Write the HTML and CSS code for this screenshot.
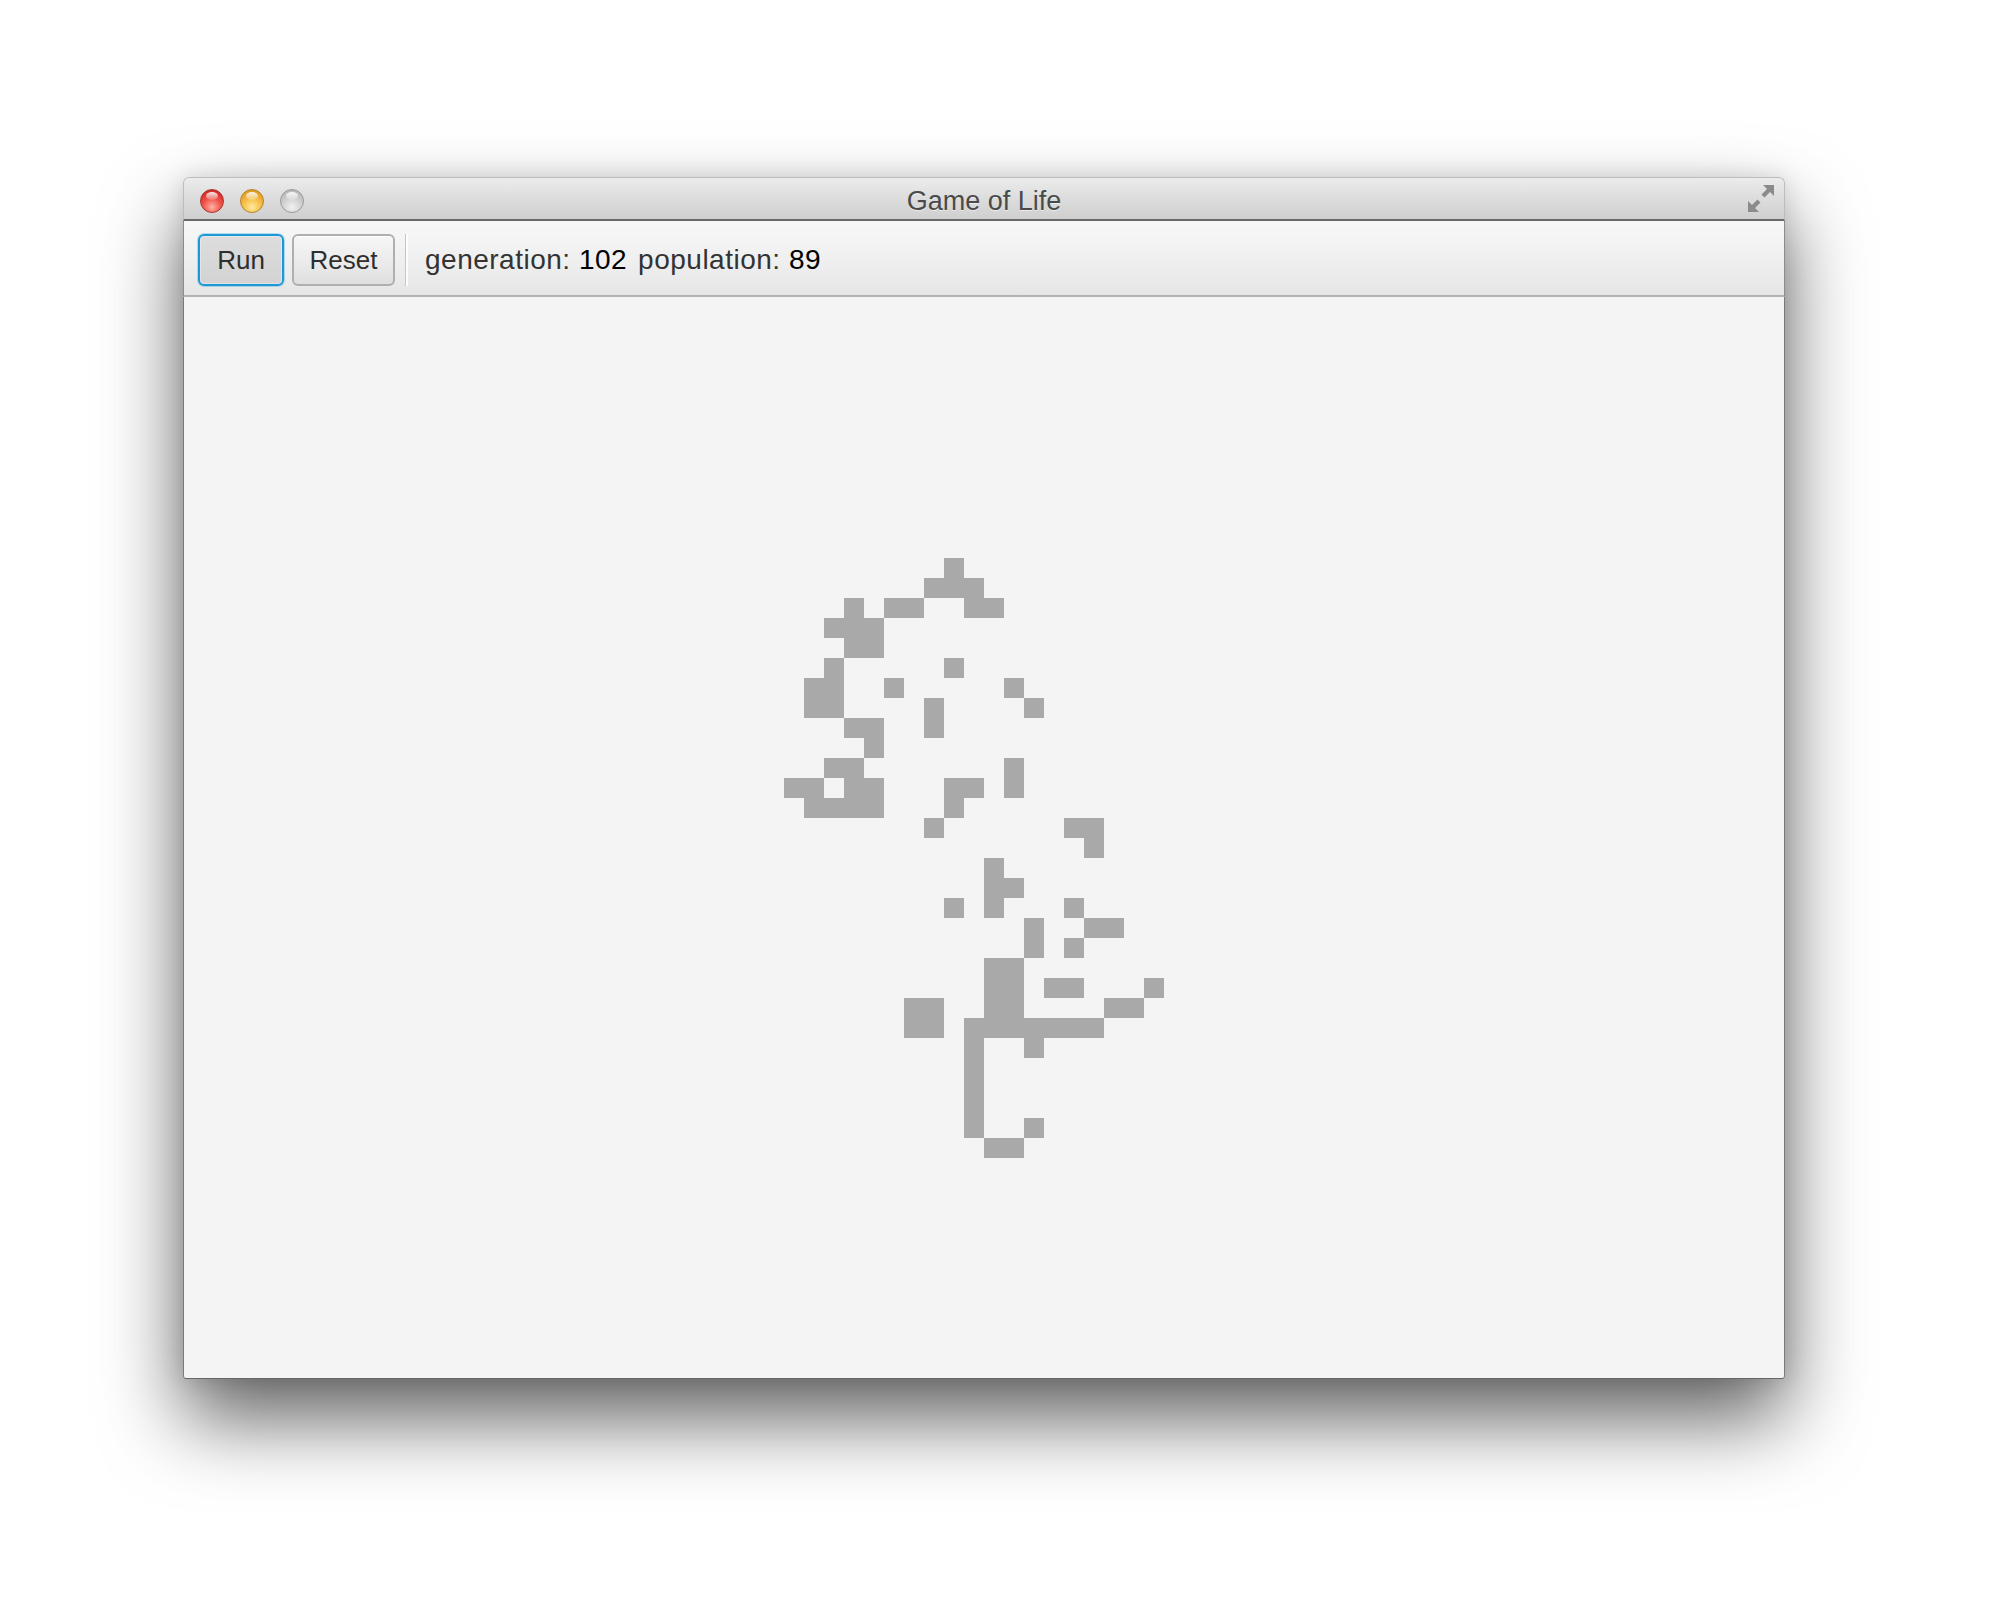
FILE: index.html
```html
<!DOCTYPE html>
<html lang="en">
<head>
<meta charset="utf-8">
<title>Game of Life</title>
<link rel="stylesheet" href="styles.css">
</head>
<body>
<div class="stage">
  <div class="window">
    <div class="titlebar">
      <div class="lights">
        <span class="light red"></span>
        <span class="light yellow"></span>
        <span class="light gray"></span>
      </div>
      <div class="title">Game of Life</div>
      <div class="resize">
        <svg width="26" height="27" viewBox="0 0 26 27">
          <path d="M26 0 L26 11 L22 7 L16.5 12.5 L13.5 9.5 L19 4 L15 0 Z" fill="#8b8b8b"/>
          <path d="M0 27 L0 16 L4 20 L9.5 14.5 L12.5 17.5 L7 23 L11 27 Z" fill="#8b8b8b"/>
        </svg>
      </div>
    </div>
    <div class="toolbar">
      <button class="btn focused">Run</button>
      <button class="btn reset">Reset</button>
      <span class="sep"></span>
      <span class="stat">generation: <span class="val">102</span></span>
      <span class="stat">population: <span class="val">89</span></span>
    </div>
    <div class="canvas">
      <svg class="board" width="1600" height="1081" viewBox="0 0 1600 1081" shape-rendering="crispEdges">
        <g transform="translate(600 261) scale(20)" fill="#a9a9a9">
          <rect x="8" y="0" width="1" height="1"/>
          <rect x="7" y="1" width="3" height="1"/>
          <rect x="3" y="2" width="1" height="1"/>
          <rect x="5" y="2" width="2" height="1"/>
          <rect x="9" y="2" width="2" height="1"/>
          <rect x="2" y="3" width="3" height="1"/>
          <rect x="3" y="4" width="2" height="1"/>
          <rect x="2" y="5" width="1" height="1"/>
          <rect x="8" y="5" width="1" height="1"/>
          <rect x="1" y="6" width="2" height="1"/>
          <rect x="5" y="6" width="1" height="1"/>
          <rect x="11" y="6" width="1" height="1"/>
          <rect x="1" y="7" width="2" height="1"/>
          <rect x="7" y="7" width="1" height="1"/>
          <rect x="12" y="7" width="1" height="1"/>
          <rect x="3" y="8" width="2" height="1"/>
          <rect x="7" y="8" width="1" height="1"/>
          <rect x="4" y="9" width="1" height="1"/>
          <rect x="2" y="10" width="2" height="1"/>
          <rect x="11" y="10" width="1" height="1"/>
          <rect x="0" y="11" width="2" height="1"/>
          <rect x="3" y="11" width="2" height="1"/>
          <rect x="8" y="11" width="2" height="1"/>
          <rect x="11" y="11" width="1" height="1"/>
          <rect x="1" y="12" width="4" height="1"/>
          <rect x="8" y="12" width="1" height="1"/>
          <rect x="7" y="13" width="1" height="1"/>
          <rect x="14" y="13" width="2" height="1"/>
          <rect x="15" y="14" width="1" height="1"/>
          <rect x="10" y="15" width="1" height="1"/>
          <rect x="10" y="16" width="2" height="1"/>
          <rect x="8" y="17" width="1" height="1"/>
          <rect x="10" y="17" width="1" height="1"/>
          <rect x="14" y="17" width="1" height="1"/>
          <rect x="12" y="18" width="1" height="1"/>
          <rect x="15" y="18" width="2" height="1"/>
          <rect x="12" y="19" width="1" height="1"/>
          <rect x="14" y="19" width="1" height="1"/>
          <rect x="10" y="20" width="2" height="1"/>
          <rect x="10" y="21" width="2" height="1"/>
          <rect x="13" y="21" width="2" height="1"/>
          <rect x="18" y="21" width="1" height="1"/>
          <rect x="6" y="22" width="2" height="1"/>
          <rect x="10" y="22" width="2" height="1"/>
          <rect x="16" y="22" width="2" height="1"/>
          <rect x="6" y="23" width="2" height="1"/>
          <rect x="9" y="23" width="7" height="1"/>
          <rect x="9" y="24" width="1" height="1"/>
          <rect x="12" y="24" width="1" height="1"/>
          <rect x="9" y="25" width="1" height="1"/>
          <rect x="9" y="26" width="1" height="1"/>
          <rect x="9" y="27" width="1" height="1"/>
          <rect x="9" y="28" width="1" height="1"/>
          <rect x="12" y="28" width="1" height="1"/>
          <rect x="10" y="29" width="2" height="1"/>
        </g>
      </svg>
    </div>
  </div>
</div>
</body>
</html>
```

FILE: styles.css
```css
html, body {
  margin: 0;
  padding: 0;
  background: #ffffff;
}

body {
  font-family: "Liberation Sans", Arial, sans-serif;
}

.stage {
  box-sizing: border-box;
  min-height: 1614px;
  padding: 177px 0 236px 183px;
}

.window {
  width: 1602px;
  display: flex;
  flex-direction: column;
  border-radius: 6px 6px 3px 3px;
  box-shadow: 0 40px 80px rgba(0, 0, 0, 0.62), 0 0 22px rgba(0, 0, 0, 0.12);
}

/* ---------- title bar ---------- */
.titlebar {
  box-sizing: border-box;
  height: 44px;
  display: grid;
  grid-template-columns: 1fr auto 1fr;
  align-items: start;
  border: 1px solid #bdbdbd;
  border-bottom: 2px solid #696969;
  border-radius: 6px 6px 0 0;
  background: linear-gradient(to bottom, #ececec 0%, #dedede 45%, #cfcfcf 100%);
}

.lights {
  display: flex;
  gap: 16px;
  padding: 11px 0 0 16px;
}

.light {
  position: relative;
  box-sizing: border-box;
  width: 24px;
  height: 24px;
  border-radius: 50%;
}

.light::after {
  content: "";
  position: absolute;
  left: 5px;
  top: 2px;
  width: 12px;
  height: 8px;
  border-radius: 50%;
  background: linear-gradient(to bottom, rgba(255, 255, 255, 0.9), rgba(255, 255, 255, 0.15));
}

.red {
  border: 1px solid #a9332d;
  background: radial-gradient(circle at 50% 78%, #ffb1a6 0%, #f2574d 42%, #d6302a 75%, #b9221e 100%);
}

.yellow {
  border: 1px solid #b7832a;
  background: radial-gradient(circle at 50% 78%, #ffeaa0 0%, #f6c04a 42%, #e2a126 75%, #c6861c 100%);
}

.gray {
  border: 1px solid #9a9a9a;
  background: radial-gradient(circle at 50% 78%, #f2f2f2 0%, #d3d3d3 42%, #bdbdbd 75%, #a8a8a8 100%);
}

.title {
  font-size: 27px;
  line-height: 41px;
  padding-top: 3px;
  color: #4a4a4a;
  text-shadow: 0 1px 0 rgba(255, 255, 255, 0.55);
  white-space: nowrap;
}

.resize {
  justify-self: end;
  padding: 7px 10px 0 0;
  line-height: 0;
}

/* ---------- toolbar ---------- */
.toolbar {
  box-sizing: border-box;
  height: 76px;
  display: flex;
  align-items: flex-start;
  padding: 13px 0 0 14px;
  border-left: 1px solid #8c8c8c;
  border-right: 1px solid #8c8c8c;
  border-bottom: 2px solid #b3b3b3;
  background: linear-gradient(to bottom, #f8f8f8 0%, #efefef 55%, #e6e6e6 100%);
}

.btn {
  box-sizing: border-box;
  height: 52px;
  margin: 0;
  padding: 0;
  font-family: "Liberation Sans", Arial, sans-serif;
  font-size: 26px;
  line-height: 48px;
  color: #2e2e2e;
  border-radius: 6px;
}

.focused {
  width: 86px;
  margin-right: 8px;
  border: 2px solid #1c9ad8;
  box-shadow: 0 0 0 1px rgba(28, 154, 216, 0.3), inset 0 0 0 1px rgba(255, 255, 255, 0.35);
  background: linear-gradient(to bottom, #dddddd 0%, #d3d3d3 100%);
}

.reset {
  width: 103px;
  border: 2px solid #afafaf;
  box-shadow: inset 0 1px 0 #ffffff;
  background: linear-gradient(to bottom, #f6f6f6 0%, #ececec 50%, #dfdfdf 100%);
}

.sep {
  box-sizing: border-box;
  width: 3px;
  height: 52px;
  margin: 0 17px 0 10px;
  border-left: 1px solid #c6c6c6;
  border-right: 2px solid #fcfcfc;
}

.stat {
  font-size: 28px;
  line-height: 52px;
  letter-spacing: 0.5px;
  color: #333333;
  white-space: nowrap;
  margin-right: 11px;
}

.val {
  color: #000000;
}

/* ---------- canvas ---------- */
.canvas {
  box-sizing: border-box;
  height: 1082px;
  border-left: 1px solid #7a7a7a;
  border-right: 1px solid #7a7a7a;
  border-bottom: 1px solid #666666;
  border-radius: 0 0 3px 3px;
  background: #f4f4f4;
  line-height: 0;
}

.board {
  display: block;
}
```
